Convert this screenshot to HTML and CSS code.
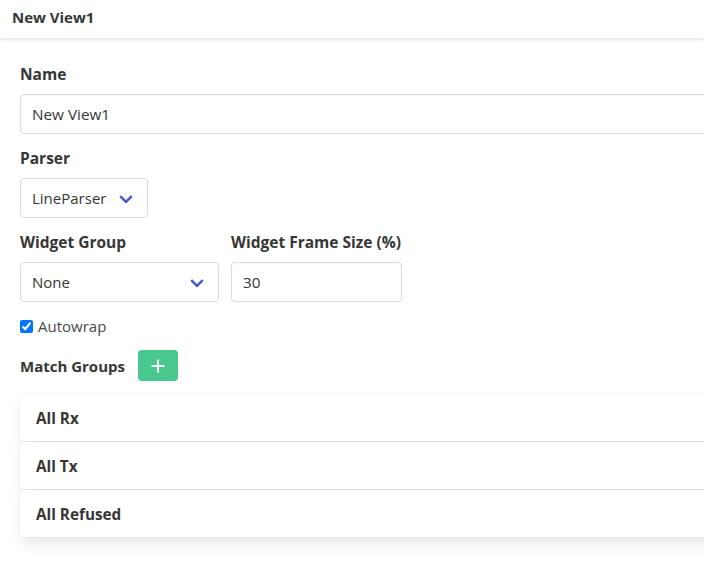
FILE: index.html
```html
<!DOCTYPE html>
<html>
<head>
<meta charset="utf-8">
<link rel="stylesheet" href="styles.css">
</head>
<body>
<header class="topbar"><span class="title">New View1</span></header>
<main class="content">
  <div class="field">
    <label class="label">Name</label>
    <input class="input input-wide" type="text" value="New View1">
  </div>
  <div class="field">
    <label class="label">Parser</label>
    <div class="select"><span class="select-text">LineParser</span></div>
  </div>
  <div class="field columns">
    <div class="col">
      <label class="label">Widget Group</label>
      <div class="select select-group"><span class="select-text">None</span></div>
    </div>
    <div class="col">
      <label class="label">Widget Frame Size (%)</label>
      <input class="input input-size" type="text" value="30">
    </div>
  </div>
  <div class="field check-row">
    <input type="checkbox" class="checkbox" checked>
    <span class="check-label">Autowrap</span>
  </div>
  <div class="field groups-head">
    <span class="label label-inline">Match Groups</span>
    <button class="btn-add" type="button" aria-label="Add">
      <svg width="16" height="16" viewBox="0 0 16 16"><path d="M8 1.5v13M1.5 8h13" stroke="#fff" stroke-width="2" fill="none"/></svg>
    </button>
  </div>
  <div class="groups">
    <div class="group-item">All Rx</div>
    <div class="group-item">All Tx</div>
    <div class="group-item">All Refused</div>
  </div>
</main>
</body>
</html>
```
FILE: styles.css
```css
* { box-sizing: border-box; }
html, body { margin: 0; padding: 0; background: #fff; overflow: hidden; }
body {
  font-family: "Open Sans", "Noto Sans", sans-serif;
  color: #363636;
  font-size: 15px;
  width: 704px;
  height: 561px;
}
.topbar {
  height: 38px;
  display: flex;
  align-items: center;
  padding: 0 12px 4px;
  background: #fff;
  box-shadow: 0 2px 4px rgba(0,0,0,0.10);
  position: relative;
  z-index: 1;
}
.title { font-weight: 700; font-size: 15px; color: #363636; }
.content {
  padding: 25px 0 0 20px;
  width: 760px;
}
.field { margin-bottom: 13px; }
.label {
  display: block;
  font-weight: 700;
  font-size: 15.5px;
  line-height: 22px;
  margin-bottom: 9px;
  color: #363636;
  white-space: nowrap;
}
.input {
  display: block;
  height: 40px;
  border: 1px solid #dbdbdb;
  border-radius: 4px;
  padding: 0 11px;
  font-family: inherit;
  font-size: 15.3px;
  color: #363636;
  background: #fff;
  box-shadow: inset 0 0.0625em 0.125em rgba(10,10,10,0.03);
  outline: none;
}
.input-wide { width: 740px; }
.input-size { width: 171px; }
.select {
  position: relative;
  display: inline-flex;
  align-items: center;
  height: 40px;
  border: 1px solid #dbdbdb;
  border-radius: 4px;
  padding: 0 41px 0 11px;
  background: #fff;
}
.select::after {
  content: "";
  position: absolute;
  right: 16px;
  top: 50%;
  width: 7px;
  height: 7px;
  margin-top: -6px;
  border: 3px solid #485fc7;
  border-top: 0;
  border-right: 0;
  border-radius: 1px;
  transform: rotate(-45deg);
}
.select-text { font-size: 15px; color: #363636; }
.select-group { width: 199px; }
.columns { display: flex; gap: 12px; }
.check-row { display: flex; align-items: center; height: 22px; }
.checkbox { margin: 0 5px 0 0; width: 13px; height: 13px; }
.check-label { font-size: 15px; color: #4a4a4a; }
.groups-head { display: flex; align-items: center; gap: 13px; height: 31px; }
.label-inline { margin: 0; font-size: 15px; }
.btn-add {
  width: 40px;
  height: 31px;
  border: 0;
  border-radius: 4px;
  background: #48c78e;
  display: flex;
  align-items: center;
  justify-content: center;
  padding: 0;
}
.groups { width: 760px; }
.group-item {
  height: 47px;
  margin-bottom: 1px;
  display: flex;
  align-items: center;
  padding-left: 16px;
  font-weight: 700;
  font-size: 15.3px;
  color: #363636;
  background: #fff;
  border-radius: 4px;
  box-shadow: 0 0.5em 1em -0.125em rgba(10,10,10,0.1), 0 0 0 1px rgba(10,10,10,0.02);
}
```
